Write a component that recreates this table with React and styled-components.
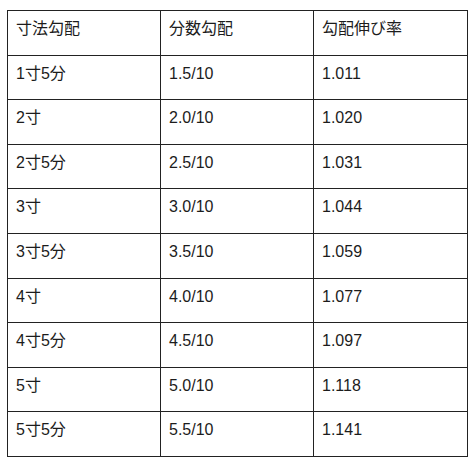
import React from 'react';
import styled, { createGlobalStyle } from 'styled-components';

const GlobalStyle = createGlobalStyle`
  body {
    margin: 0;
    background: #fff;
    font-family: "Liberation Sans", Arial, "Noto Sans CJK JP", sans-serif;
    color: #1c1c1c;
  }
`;

const Wrapper = styled.div`
  padding: 10px 0 0 7px;
`;

const Table = styled.table`
  border-collapse: collapse;
  width: 460px;
  table-layout: fixed;
  border: 1.5px solid #444;
`;

const Col = styled.col`
  width: ${(p) => p.$w}px;
`;

const Cell = styled.td`
  border: 1px solid #222;
  height: 44.6px;
  padding: 9px 8px 0 8px;
  box-sizing: border-box;
  vertical-align: top;
  font-size: 16px;
  line-height: 18px;
  text-align: left;
  font-weight: normal;
`;

const rows = [
  ['寸法勾配', '分数勾配', '勾配伸び率'],
  ['1寸5分', '1.5/10', '1.011'],
  ['2寸', '2.0/10', '1.020'],
  ['2寸5分', '2.5/10', '1.031'],
  ['3寸', '3.0/10', '1.044'],
  ['3寸5分', '3.5/10', '1.059'],
  ['4寸', '4.0/10', '1.077'],
  ['4寸5分', '4.5/10', '1.097'],
  ['5寸', '5.0/10', '1.118'],
  ['5寸5分', '5.5/10', '1.141'],
];

export default function App() {
  return (
    <>
      <GlobalStyle />
      <Wrapper>
        <Table>
          <colgroup>
            <Col $w={153} />
            <Col $w={153} />
            <Col $w={154} />
          </colgroup>
          <tbody>
            {rows.map((row, i) => (
              <tr key={i}>
                {row.map((text, j) => (
                  <Cell key={j}>{text}</Cell>
                ))}
              </tr>
            ))}
          </tbody>
        </Table>
      </Wrapper>
    </>
  );
}
